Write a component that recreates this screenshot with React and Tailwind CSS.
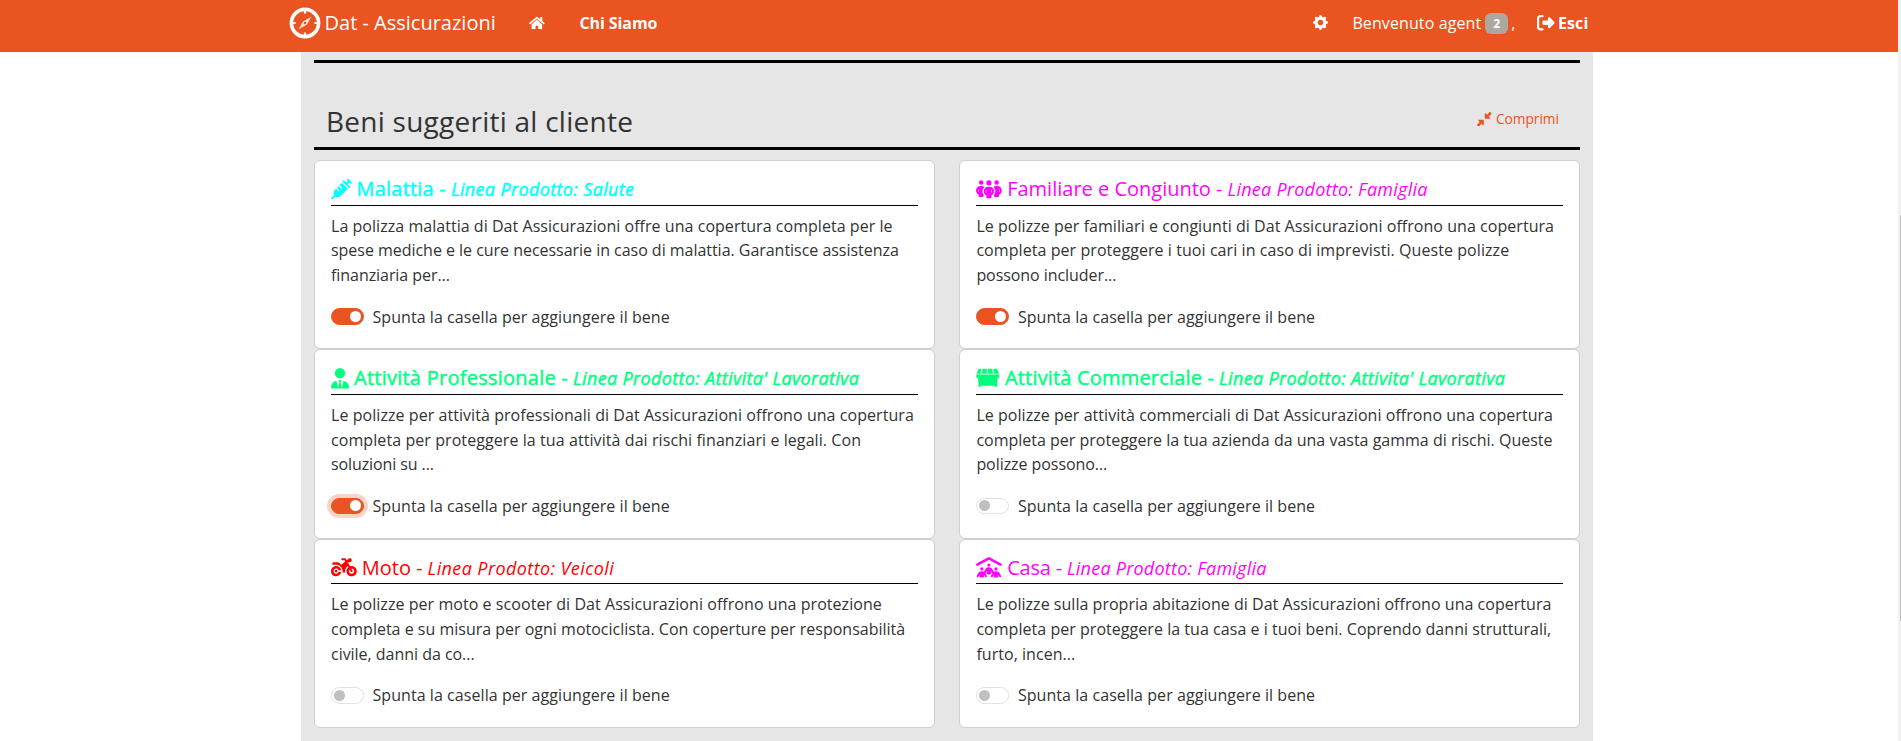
import React from 'react';
import { FaHome } from 'react-icons/fa';
import {
  FaDownLeftAndUpRightToCenter,
  FaMotorcycle,
  FaPeopleGroup,
  FaPeopleRoof,
  FaRightFromBracket,
  FaSyringe,
  FaUserTie,
} from 'react-icons/fa6';
import { BsGearFill } from 'react-icons/bs';

function CompassLogo() {
  return (
    <svg viewBox="0 0 32 32" className="h-8 w-8 shrink-0" fill="none" stroke="#fff">
      <circle cx="16" cy="16" r="13.6" strokeWidth="3.6" />
      <path d="M16 3v3.6M16 25.4V29M3 16h3.6M25.4 16H29" strokeWidth="2.2" />
      <path d="M22.3 9.7 18 17.6 9.7 22.3 14 14.4Z" fill="#fff" fillOpacity="0.85" stroke="none" />
      <circle cx="16" cy="16" r="1.3" fill="#e95420" stroke="none" />
    </svg>
  );
}

function StallIcon({ className }) {
  return (
    <svg viewBox="0 0 24 20" className={className} fill="currentColor">
      <path d="M2.6 .5h3L5 5.6H.4zM6.6 .5h4.5v5.1H5.9zM12.1 .5h4.4l.9 5.1h-5.3zM17.5 .5h3.9l2.2 5.1h-5.1z" />
      <path d="M.2 6.4h23.6v3.4H22l-.5 7.6h.2V19h-2.6v-1.2H5V19H2.4v-1.6h.3L2 9.8H.2z" />
    </svg>
  );
}

function Switch({ on, focused }) {
  return (
    <span
      className={`flex h-[16.5px] w-[33px] shrink-0 items-center rounded-full border px-[2px] ${
        on ? 'justify-end border-[#e95420] bg-[#e95420]' : 'border-[#dee2e6] bg-white'
      } ${focused ? 'ring-4 ring-[#e95420]/25' : ''}`}
    >
      <span className={`h-[11px] w-[11px] rounded-full ${on ? 'bg-white' : 'bg-[#bfbfbf]'}`} />
    </span>
  );
}

const cards = [
  {
    title: 'Malattia -',
    line: 'Linea Prodotto: Salute',
    color: 'text-[#00ffff] [-webkit-text-stroke:0.45px_currentColor]',
    icon: <FaSyringe className="h-[20.6px] w-[20.6px]" />,
    titleClass: 'tracking-[0.2px]',
    lineClass: 'tracking-[0.36px]',
    text: [
      ['La polizza malattia di Dat Assicurazioni offre una copertura completa per le', 'tracking-[0.04px]'],
      ['spese mediche e le cure necessarie in caso di malattia. Garantisce assistenza', 'tracking-[-0.03px]'],
      ['finanziaria per...', 'tracking-[-0.06px]'],
    ],
    on: true,
  },
  {
    title: 'Familiare e Congiunto -',
    line: 'Linea Prodotto: Famiglia',
    color: 'text-[#ff00ff]',
    icon: <FaPeopleGroup className="h-[20.6px] w-[25.8px]" />,
    titleClass: 'tracking-[0px]',
    lineClass: 'tracking-[0.25px]',
    text: [
      ['Le polizze per familiari e congiunti di Dat Assicurazioni offrono una copertura', 'tracking-[0.045px]'],
      ['completa per proteggere i tuoi cari in caso di imprevisti. Queste polizze', 'tracking-[0.07px]'],
      ['possono includer...', 'tracking-[-0.06px]'],
    ],
    on: true,
  },
  {
    title: 'Attività Professionale -',
    line: "Linea Prodotto: Attivita' Lavorativa",
    color: 'text-[#00ff7f] [-webkit-text-stroke:0.45px_currentColor]',
    icon: <FaUserTie className="h-[20.6px] w-[18px]" />,
    titleClass: 'tracking-[0.25px]',
    lineClass: 'tracking-[0.34px]',
    text: [
      ['Le polizze per attività professionali di Dat Assicurazioni offrono una copertura', 'tracking-[0.06px]'],
      ['completa per proteggere la tua attività dai rischi finanziari e legali. Con', 'tracking-[0.08px]'],
      ['soluzioni su ...', 'tracking-[-0.1px]'],
    ],
    on: true,
    focused: true,
  },
  {
    title: 'Attività Commerciale -',
    line: "Linea Prodotto: Attivita' Lavorativa",
    color: 'text-[#00ff7f] [-webkit-text-stroke:0.45px_currentColor]',
    icon: <StallIcon className="h-[20px] w-[23.6px]" />,
    titleClass: 'tracking-[0.18px]',
    lineClass: 'tracking-[0.34px]',
    text: [
      ['Le polizze per attività commerciali di Dat Assicurazioni offrono una copertura', 'tracking-[0.045px]'],
      ['completa per proteggere la tua azienda da una vasta gamma di rischi. Queste', 'tracking-[0px]'],
      ['polizze possono...', 'tracking-[-0.06px]'],
    ],
  },
  {
    title: 'Moto -',
    line: 'Linea Prodotto: Veicoli',
    color: 'text-[#ff0000]',
    icon: <FaMotorcycle className="h-[20.6px] w-[25.8px]" />,
    titleClass: 'tracking-[0px]',
    lineClass: 'tracking-[0.4px]',
    text: [
      ['Le polizze per moto e scooter di Dat Assicurazioni offrono una protezione', 'tracking-[0.055px]'],
      ['completa e su misura per ogni motociclista. Con coperture per responsabilità', 'tracking-[0px]'],
      ['civile, danni da co...', 'tracking-[-0.03px]'],
    ],
  },
  {
    title: 'Casa -',
    line: 'Linea Prodotto: Famiglia',
    color: 'text-[#ff00ff]',
    icon: <FaPeopleRoof className="h-[20.6px] w-[25.8px]" />,
    titleClass: 'tracking-[-0.2px]',
    lineClass: 'tracking-[0.23px]',
    text: [
      ['Le polizze sulla propria abitazione di Dat Assicurazioni offrono una copertura', 'tracking-[0.03px]'],
      ['completa per proteggere la tua casa e i tuoi beni. Coprendo danni strutturali,', 'tracking-[0.04px]'],
      ['furto, incen...', 'tracking-[0.04px]'],
    ],
  },
];

function Card({ title, line, color, icon, titleClass, lineClass, text, on, focused }) {
  return (
    <div className="h-[189.35px] rounded-[6px] border border-[#cfcfcf] bg-white px-[16px] pt-[16.5px]">
      <h5 className={`flex h-[28px] items-center gap-[5px] border-b border-b-black pb-[4px] ${color}`}>
        {icon}
        <span className={`text-[20px] whitespace-nowrap ${titleClass}`}>{title}</span>
        <span className={`pt-[1px] text-[18px] whitespace-nowrap italic ${lineClass}`}>{line}</span>
      </h5>
      <p className="mt-[8px] text-[16px] leading-[24.75px] whitespace-nowrap">
        {text.map(([t, tracking]) => (
          <span key={t} className={`block ${tracking}`}>
            {t}
          </span>
        ))}
      </p>
      <label className="mt-[16.5px] flex h-[24.75px] items-center gap-[8.5px]">
        <Switch on={on} focused={focused} />
        <span className="text-[16px] tracking-[0.06px]">Spunta la casella per aggiungere il bene</span>
      </label>
    </div>
  );
}

export default function App() {
  return (
    <div className="flex h-[741px] w-full overflow-hidden bg-white font-['Open_Sans',sans-serif] text-[#333333]">
      <div className="flex min-w-0 flex-1 flex-col">
        <nav className="flex h-[52px] shrink-0 justify-center bg-[#e95420] pr-[21px] text-white">
          <div className="flex h-[45px] w-[1300px] items-center">
            <CompassLogo />
            <span className="ml-[4px] text-[20px] whitespace-nowrap">Dat - Assicurazioni</span>
            <FaHome className="ml-[33px] h-[14px] w-[15.75px]" />
            <span className="ml-[35px] text-[16px] font-bold tracking-[-0.1px] whitespace-nowrap">Chi Siamo</span>
            <div className="ml-auto flex items-center">
              <BsGearFill className="h-[15px] w-[15px]" />
              <span className="ml-[24px] text-[16px] tracking-[0.1px] whitespace-nowrap">Benvenuto agent</span>
              <span className="mt-[2px] ml-[4px] flex h-[21px] w-[23px] items-center justify-center rounded-[6px] bg-[#aea79f] text-[12px] font-bold">
                2
              </span>
              <span className="ml-[3px] text-[16px]">,</span>
              <FaRightFromBracket className="ml-[22px] h-[17.5px] w-[17.5px]" />
              <span className="ml-[3px] text-[16px] font-bold tracking-[0.15px]">Esci</span>
            </div>
          </div>
        </nav>
        <div className="flex min-h-0 flex-1 justify-center pr-[4px]">
          <main className="w-[1292px] bg-[#e6e6e6] px-[13px] pt-[8px]">
            <div className="flex h-[90px] items-center justify-between border-y-[3px] border-black pr-[21px] pl-[12px]">
              <h3 className="pt-[31px] text-[28px] leading-[34px] tracking-[0.25px]">Beni suggeriti al cliente</h3>
              <a className="flex items-center gap-[4px] pt-[28px] text-[13.7px] text-[#e95420]">
                <FaDownLeftAndUpRightToCenter className="h-[14.5px] w-[14.5px]" />
                Comprimi
              </a>
            </div>
            <div className="mt-[10px] grid grid-cols-2 gap-x-[24.75px]">
              {cards.map((c) => (
                <Card key={c.title} {...c} />
              ))}
            </div>
          </main>
        </div>
      </div>
      <div className="flex w-[3px] justify-end bg-[#f1f1f1] pt-[215px]">
        <div className="h-[406px] w-px bg-[#c1c1c1]" />
      </div>
    </div>
  );
}
